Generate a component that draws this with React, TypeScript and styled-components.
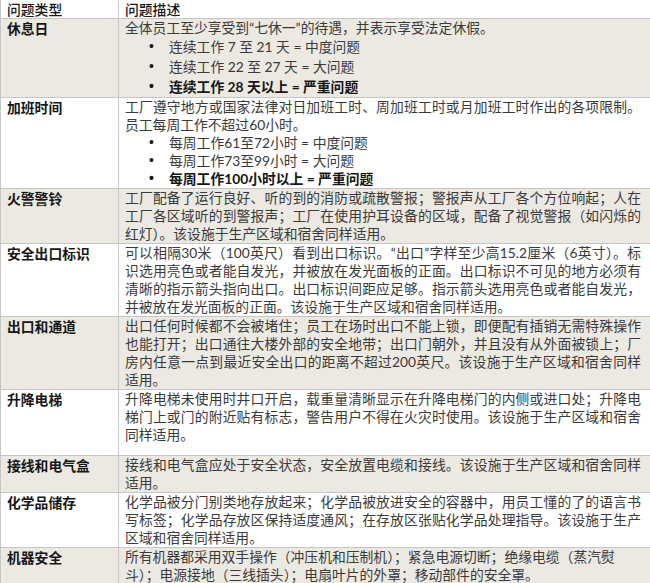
import React from "react";
import styled, { createGlobalStyle } from "styled-components";

const GlobalStyle = createGlobalStyle`
  html, body {
    margin: 0;
    padding: 0;
    background: #ffffff;
  }
`;

interface BulletData {
  text: string;
  strong?: boolean;
}

interface RowData {
  label: string;
  lines: string[];
  bullets?: BulletData[];
  bulletHeight?: number; // line height of the bullet items
  blank?: number; // empty paragraph after the text
  open?: number[]; // lines Word left unjustified
}

const rows: RowData[] = [
  {
    label: "休息日",
    lines: ["全体员工至少享受到“七休一”的待遇，并表示享受法定休假。"],
    bullets: [
      { text: "连续工作 7 至 21 天 = 中度问题" },
      { text: "连续工作 22 至 27 天 = 大问题" },
      { text: "连续工作 28 天以上 = 严重问题", strong: true },
    ],
    bulletHeight: 20,
  },
  {
    label: "加班时间",
    lines: [
      "工厂遵守地方或国家法律对日加班工时、周加班工时或月加班工时作出的各项限制。",
      "员工每周工作不超过60小时。",
    ],
    bullets: [
      { text: "每周工作61至72小时 = 中度问题" },
      { text: "每周工作73至99小时 = 大问题" },
      { text: "每周工作100小时以上 = 严重问题", strong: true },
    ],
    bulletHeight: 18,
  },
  {
    label: "火警警铃",
    lines: [
      "工厂配备了运行良好、听的到的消防或疏散警报；警报声从工厂各个方位响起；人在",
      "工厂各区域听的到警报声；工厂在使用护耳设备的区域，配备了视觉警报（如闪烁的",
      "红灯）。该设施于生产区域和宿舍同样适用。",
    ],
  },
  {
    label: "安全出口标识",
    lines: [
      "可以相隔30米（100英尺）看到出口标识。“出口”字样至少高15.2厘米（6英寸）。标",
      "识选用亮色或者能自发光，并被放在发光面板的正面。出口标识不可见的地方必须有",
      "清晰的指示箭头指向出口。出口标识间距应足够。指示箭头选用亮色或者能自发光，",
      "并被放在发光面板的正面。该设施于生产区域和宿舍同样适用。",
    ],
  },
  {
    label: "出口和通道",
    lines: [
      "出口任何时候都不会被堵住；员工在场时出口不能上锁，即便配有插销无需特殊操作",
      "也能打开；出口通往大楼外部的安全地带；出口门朝外，并且没有从外面被锁上；厂",
      "房内任意一点到最近安全出口的距离不超过200英尺。该设施于生产区域和宿舍同样",
      "适用。",
    ],
  },
  {
    label: "升降电梯",
    lines: [
      "升降电梯未使用时井口开启，载重量清晰显示在升降电梯门的内侧或进口处；升降电",
      "梯门上或门的附近贴有标志，警告用户不得在火灾时使用。该设施于生产区域和宿舍",
      "同样适用。",
    ],
    blank: 11,
  },
  {
    label: "接线和电气盒",
    lines: [
      "接线和电气盒应处于安全状态，安全放置电缆和接线。该设施于生产区域和宿舍同样",
      "适用。",
    ],
  },
  {
    label: "化学品储存",
    lines: [
      "化学品被分门别类地存放起来；化学品被放进安全的容器中，用员工懂的了的语言书",
      "写标签；化学品存放区保持适度通风；在存放区张贴化学品处理指导。该设施于生产",
      "区域和宿舍同样适用。",
    ],
  },
  {
    label: "机器安全",
    lines: [
      "所有机器都采用双手操作（冲压机和压制机）；紧急电源切断；绝缘电缆（蒸汽熨",
      "斗）；电源接地（三线插头）；电扇叶片的外罩；移动部件的安全罩。",
    ],
    open: [0],
  },
];

const Table = styled.div`
  width: 650px;
  border-left: 1px solid #c6c6c6;
  box-sizing: border-box;
  font-family: "Lato", "Noto Sans CJK SC", sans-serif;
  font-size: 13.8px;
  line-height: 18px;
`;

const Row = styled.div<{ $shade: boolean }>`
  display: grid;
  grid-template-columns: 118px 1fr;
  background: ${(p) => (p.$shade ? "#ecE9e2" : "#ffffff")};
  border-bottom: 1px solid #c6c6c6;
`;

const Label = styled.div<{ $head?: boolean }>`
  padding: 0 4px 0 6px;
  border-right: 1px solid #c6c6c6;
  font-family: "Noto Sans CJK SC", sans-serif;
  font-weight: ${(p) => (p.$head ? 500 : 700)};
  color: #161616;
`;

const Desc = styled.div`
  padding: 0 9px 0 6px;
  color: #3a3a3a;
  min-width: 0;
`;

const HeadText = styled.div`
  font-family: "Noto Sans CJK SC", sans-serif;
  font-weight: 500;
  color: #161616;
`;

const Line = styled.div<{ $fill: boolean }>`
  white-space: nowrap;
  text-align: ${(p) => (p.$fill ? "justify" : "left")};
  text-align-last: ${(p) => (p.$fill ? "justify" : "left")};
`;

const BulletList = styled.ul`
  list-style: none;
  margin: 0;
  padding: 0 0 0 24px;
`;

const BulletItem = styled.li<{ $strong?: boolean; $height: number }>`
  display: flex;
  line-height: ${(p) => p.$height}px;
  white-space: nowrap;
  font-weight: ${(p) => (p.$strong ? 700 : 400)};
  color: ${(p) => (p.$strong ? "#161616" : "#3a3a3a")};
`;

const Dot = styled.span`
  flex: none;
  width: 20px;
  font-family: "Liberation Sans", sans-serif;
  color: #161616;
`;

const BlankPara = styled.div<{ $height: number }>`
  height: ${(p) => p.$height}px;
`;

function DescCell({ row }: { row: RowData }) {
  return (
    <Desc>
      {row.lines.map((line, i) => (
        <Line
          key={i}
          $fill={i < row.lines.length - 1 && !(row.open || []).includes(i)}
        >
          {line}
        </Line>
      ))}
      {row.bullets && (
        <BulletList>
          {row.bullets.map((b) => (
            <BulletItem key={b.text} $strong={b.strong} $height={row.bulletHeight || 18}>
              <Dot>•</Dot>
              {b.text}
            </BulletItem>
          ))}
        </BulletList>
      )}
      {row.blank ? <BlankPara $height={row.blank} /> : null}
    </Desc>
  );
}

export default function App() {
  return (
    <>
      <GlobalStyle />
      <Table>
        <Row $shade={false}>
          <Label $head>问题类型</Label>
          <Desc>
            <HeadText>问题描述</HeadText>
          </Desc>
        </Row>
        {rows.map((row, i) => (
          <Row key={row.label} $shade={i % 2 === 0}>
            <Label>{row.label}</Label>
            <DescCell row={row} />
          </Row>
        ))}
      </Table>
    </>
  );
}
